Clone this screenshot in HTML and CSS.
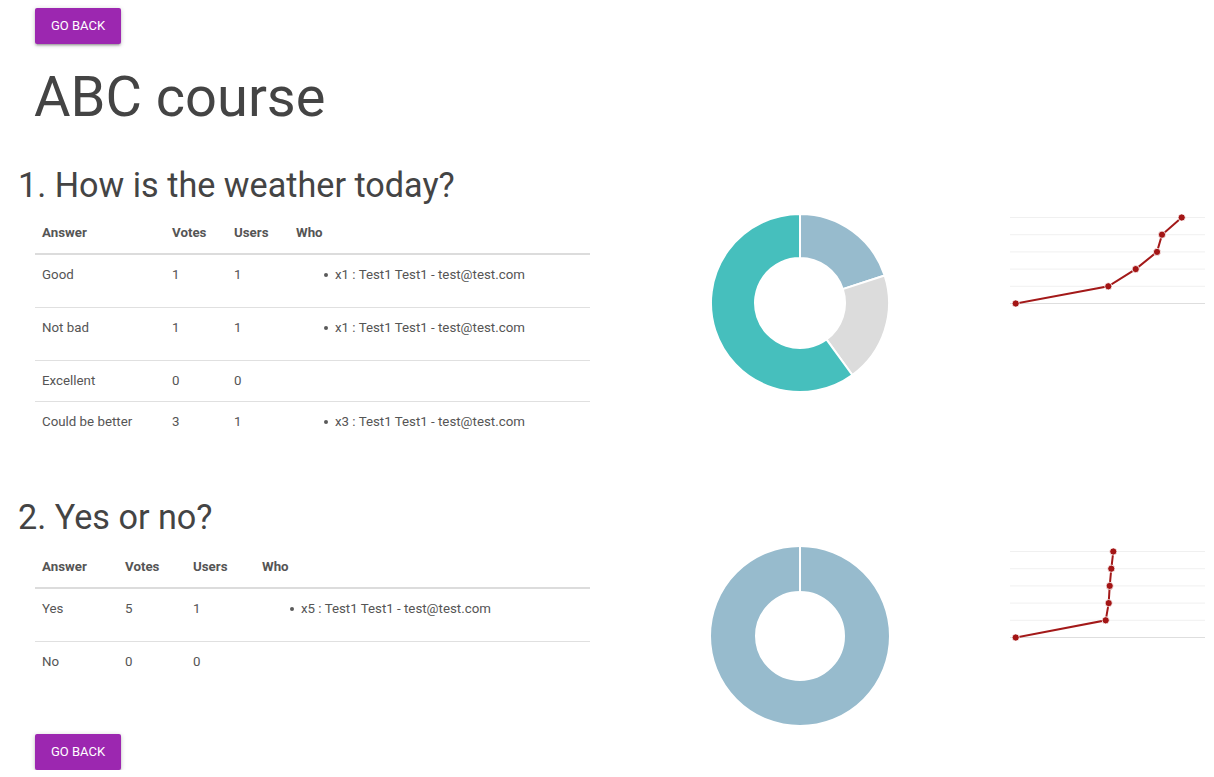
FILE: index.html
```html
<!DOCTYPE html>
<html>
<head>
<meta charset="utf-8">
<title>ABC course</title>
<link rel="stylesheet" href="styles.css">
</head>
<body>
<div class="page">
  <div class="btn-row"><a class="btn">Go back</a></div>
  <h1 class="course-title">ABC course</h1>

  <section class="question q1">
    <h2 class="q-title">1. How is the weather today?</h2>
    <div class="q-row">
      <div class="q-table-col">
        <table class="results t1">
          <colgroup><col class="c-ans"><col class="c-votes"><col class="c-users"><col class="c-who"></colgroup>
          <thead>
            <tr><th>Answer</th><th>Votes</th><th>Users</th><th>Who</th></tr>
          </thead>
          <tbody>
            <tr><td>Good</td><td>1</td><td>1</td><td><ul class="who"><li>x1 : Test1 Test1 - test@test.com</li></ul></td></tr>
            <tr><td>Not bad</td><td>1</td><td>1</td><td><ul class="who"><li>x1 : Test1 Test1 - test@test.com</li></ul></td></tr>
            <tr><td>Excellent</td><td>0</td><td>0</td><td></td></tr>
            <tr><td>Could be better</td><td>3</td><td>1</td><td><ul class="who"><li>x3 : Test1 Test1 - test@test.com</li></ul></td></tr>
          </tbody>
        </table>
      </div>
      <div class="q-doughnut-col">
        <svg class="doughnut" width="180" height="180" viewBox="0 0 180 180">
          <path class="seg" fill="#97BBCD" d="M90 1 A89 89 0 0 1 174.64 62.50 L132.80 76.09 A45 45 0 0 0 90 45 Z"/>
          <path class="seg" fill="#DCDCDC" d="M174.64 62.50 A89 89 0 0 1 142.31 162 L116.45 126.41 A45 45 0 0 0 132.80 76.09 Z"/>
          <path class="seg" fill="#46BFBD" d="M142.31 162 A89 89 0 1 1 90 1 L90 45 A45 45 0 1 0 116.45 126.41 Z"/>
        </svg>
      </div>
      <div class="q-line-col">
        <svg class="linechart" width="195" height="100" viewBox="0 0 195 100">
          <line class="grid" x1="0" y1="5.5" x2="195" y2="5.5"/>
          <line class="grid" x1="0" y1="22.7" x2="195" y2="22.7"/>
          <line class="grid" x1="0" y1="39.9" x2="195" y2="39.9"/>
          <line class="grid" x1="0" y1="57.1" x2="195" y2="57.1"/>
          <line class="grid" x1="0" y1="74.3" x2="195" y2="74.3"/>
          <line class="axis" x1="0" y1="91.5" x2="195" y2="91.5"/>
          <polyline class="series" points="5.7,91.5 98.3,74.3 125.7,57.1 147,39.9 152,22.7 171.7,5.5"/>
          <circle class="pt" cx="5.7" cy="91.5" r="3.6"/>
          <circle class="pt" cx="98.3" cy="74.3" r="3.6"/>
          <circle class="pt" cx="125.7" cy="57.1" r="3.6"/>
          <circle class="pt" cx="147" cy="39.9" r="3.6"/>
          <circle class="pt" cx="152" cy="22.7" r="3.6"/>
          <circle class="pt" cx="171.7" cy="5.5" r="3.6"/>
        </svg>
      </div>
    </div>
  </section>

  <section class="question q2">
    <h2 class="q-title">2. Yes or no?</h2>
    <div class="q-row">
      <div class="q-table-col">
        <table class="results t2">
          <colgroup><col class="c-ans"><col class="c-votes"><col class="c-users"><col class="c-who"></colgroup>
          <thead>
            <tr><th>Answer</th><th>Votes</th><th>Users</th><th>Who</th></tr>
          </thead>
          <tbody>
            <tr><td>Yes</td><td>5</td><td>1</td><td><ul class="who"><li>x5 : Test1 Test1 - test@test.com</li></ul></td></tr>
            <tr><td>No</td><td>0</td><td>0</td><td></td></tr>
          </tbody>
        </table>
      </div>
      <div class="q-doughnut-col">
        <svg class="doughnut" width="180" height="180" viewBox="0 0 180 180">
          <circle cx="90" cy="90" r="67" fill="none" stroke="#97BBCD" stroke-width="44"/>
          <line x1="90" y1="0" x2="90" y2="46" stroke="#fff" stroke-width="2"/>
        </svg>
      </div>
      <div class="q-line-col">
        <svg class="linechart" width="195" height="100" viewBox="0 0 195 100">
          <line class="grid" x1="0" y1="6.5" x2="195" y2="6.5"/>
          <line class="grid" x1="0" y1="23.7" x2="195" y2="23.7"/>
          <line class="grid" x1="0" y1="40.9" x2="195" y2="40.9"/>
          <line class="grid" x1="0" y1="58.1" x2="195" y2="58.1"/>
          <line class="grid" x1="0" y1="75.3" x2="195" y2="75.3"/>
          <line class="axis" x1="0" y1="92.5" x2="195" y2="92.5"/>
          <polyline class="series" points="5.7,92.5 95.7,75.3 98.7,58.1 99.7,40.9 101.3,23.7 103.3,6.5"/>
          <circle class="pt" cx="5.7" cy="92.5" r="3.6"/>
          <circle class="pt" cx="95.7" cy="75.3" r="3.6"/>
          <circle class="pt" cx="98.7" cy="58.1" r="3.6"/>
          <circle class="pt" cx="99.7" cy="40.9" r="3.6"/>
          <circle class="pt" cx="101.3" cy="23.7" r="3.6"/>
          <circle class="pt" cx="103.3" cy="6.5" r="3.6"/>
        </svg>
      </div>
    </div>
  </section>

  <div class="btn-row bottom"><a class="btn">Go back</a></div>
</div>
</body>
</html>
```

FILE: styles.css
```css
* { box-sizing: border-box; }

html, body {
  margin: 0;
  padding: 0;
  background: #fff;
}

body {
  font-family: Roboto, "Liberation Sans", Arial, sans-serif;
  color: #444;
}

.page {
  padding-top: 8px;
  width: 1214px;
}

.btn-row {
  padding-left: 35px;
  height: 36px;
}

.btn-row.bottom {
  margin-top: 8px;
}

.btn {
  display: inline-block;
  height: 36px;
  line-height: 36px;
  padding: 0 16px;
  background: #9c27b0;
  color: #fff;
  font-size: 13px;
  text-transform: uppercase;
  border-radius: 2px;
  box-shadow: 0 2px 2px 0 rgba(0,0,0,0.14), 0 3px 1px -2px rgba(0,0,0,0.12), 0 1px 5px 0 rgba(0,0,0,0.2);
  cursor: pointer;
  user-select: none;
}

.course-title {
  font-size: 56px;
  font-weight: 400;
  line-height: 1.1;
  margin: 23px 0 0 34px;
  color: #444;
}

.q-title {
  font-size: 34.2px;
  font-weight: 400;
  line-height: 1.1;
  margin: 0 0 8px 18px;
  color: #444;
}

.q1 .q-title { margin-top: 38px; }
.q2 .q-title { margin-top: 45px; }

.q-row {
  display: flex;
  align-items: flex-start;
}

.q-table-col {
  width: 590px;
  padding-left: 35px;
  flex: none;
}

.q1 .q-table-col { padding-top: 1px; }
.q2 .q-table-col { padding-top: 2px; }

.q-doughnut-col {
  flex: 1;
  display: flex;
  justify-content: center;
  padding-top: 1px;
}

.q-line-col {
  width: 204px;
  flex: none;
}

.doughnut { display: block; }
.doughnut .seg { stroke: #fff; stroke-width: 2; stroke-linejoin: miter; }

.linechart { display: block; overflow: visible; }
.linechart .grid { stroke: #f0f0f0; stroke-width: 1; }
.linechart .axis { stroke: #dedede; stroke-width: 1; }
.linechart .series { fill: none; stroke: #a31919; stroke-width: 2; }
.linechart .pt { fill: #a31515; stroke: #fff; stroke-width: 0.8; }

.results {
  width: 555px;
  border-collapse: collapse;
  table-layout: fixed;
  font-size: 13.3px;
  color: #555;
}

.t1 .c-ans { width: 130px; }
.t1 .c-votes { width: 62px; }
.t1 .c-users { width: 62px; }
.t1 .c-who { width: 301px; }

.t2 .c-ans { width: 83px; }
.t2 .c-votes { width: 68px; }
.t2 .c-users { width: 69px; }
.t2 .c-who { width: 335px; }

.results th,
.results td {
  padding: 10px 7px;
  line-height: 20px;
  text-align: left;
  vertical-align: top;
}

.results th {
  font-weight: 700;
  color: #555;
}

.results thead tr {
  border-bottom: 2px solid #dcdcdc;
}

.results tbody tr {
  border-bottom: 1px solid #e0e0e0;
}

.results tbody tr:last-child {
  border-bottom: none;
}

.who {
  margin: 0 0 12px 0;
  padding-left: 39px;
  list-style: none;
}

.who li::before {
  content: "";
  display: inline-block;
  width: 4px;
  height: 4px;
  border-radius: 50%;
  background: #5a5a5a;
  margin-left: -11px;
  margin-right: 7px;
  vertical-align: 2px;
}
```
